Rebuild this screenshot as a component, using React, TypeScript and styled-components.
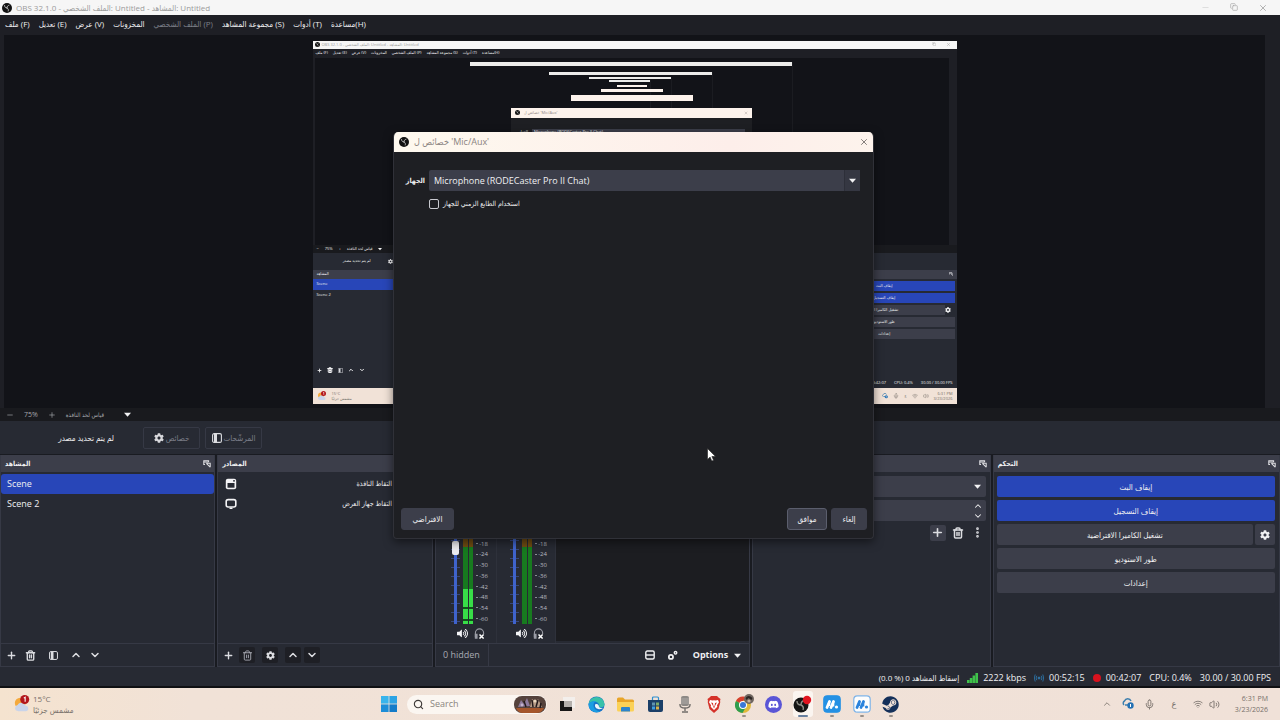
import React from 'react';
import styled, { createGlobalStyle, css } from 'styled-components';
import {
  Plus, Trash2, ChevronUp, ChevronDown, EllipsisVertical, Search, Wifi, Volume2, Mic, X, Copy, Minus,
} from 'lucide-react';
import { FaCog, FaDiscord, FaVolumeUp, FaSteam } from 'react-icons/fa';

const c = {
  base: '#1e1f25',
  canvas: '#121318',
  panel: '#272a33',
  header: '#3c3e4a',
  control: '#3c3e4a',
  line: '#363945',
  blue: '#2846b8',
  text: '#f0f0f2',
  dim: '#7c7f89',
  dialog: '#1e1f23',
  cream: '#fdf3ec',
  taskbar: '#f1e2d7',
};

const Global = createGlobalStyle`
  *, *::before, *::after { box-sizing: border-box; }
  body { margin: 0; background: ${c.base}; }
  body, button, input, select {
    font-family: "Open Sans", "DejaVu Sans Condensed", "DejaVu Sans", sans-serif;
    font-size: 9px;
    line-height: 12px;
    color: ${c.text};
  }
  button, input, select { margin: 0; padding: 0; border: 0; background: none; }
  ul { list-style: none; margin: 0; padding: 0; }
  h1, h2, p { margin: 0; font: inherit; }
  svg { display: block; flex: none; }
`;

const Desktop = styled.div`
  position: relative;
  min-height: 100vh;
  display: flex;
  flex-direction: column;
  overflow: hidden;
  background: ${c.base};
`;

/* ---------- window chrome ---------- */

const TitleBar = styled.header`
  display: flex;
  align-items: center;
  gap: 4px;
  height: 15px;
  padding: 0 12px 0 2px;
  background: #f6f6f6;
  color: #9b9b9b;
`;

const WindowTitle = styled.h1`
  flex: 1;
  white-space: nowrap;
  font-size: 8px;
`;

const WindowButtons = styled.div`
  display: flex;
  gap: 20px;
  color: #a4a4a4;
`;

const MenuBar = styled.nav`
  display: flex;
  align-items: center;
  gap: 9px;
  height: 18px;
  padding: 0 5px;
  background: ${c.base};
`;

const MenuItem = styled.button<{ $dim?: boolean }>`
  white-space: nowrap;
  font-size: 8px;
  color: ${p => (p.$dim ? c.dim : c.text)};
`;

/* ---------- preview ---------- */

const Preview = styled.main`
  flex: 1 1 auto;
  min-height: 373px;
  display: flex;
  justify-content: center;
  align-items: center;
  margin: 2px 15px 0 4px;
  padding-top: 1px;
  background: ${c.canvas};
`;

const Capture = styled.div`
  display: flex;
  flex-direction: column;
  height: 363px;
  aspect-ratio: 644 / 363;
  overflow: hidden;
  font-size: 4px;
  line-height: 6px;
  background: ${c.base};
  position: relative;
`;

const MiniTitle = styled.div`
  display: flex;
  align-items: center;
  gap: 2px;
  height: 8px;
  flex: none;
  padding: 0 6px 0 2px;
  background: #f6f6f6;
  color: #9b9b9b;
  & > span { flex: 1; white-space: nowrap; }
`;

const MiniWindowButtons = styled.div`
  display: flex;
  gap: 10px;
`;

const MiniMenu = styled.div`
  display: flex;
  align-items: center;
  gap: 5px;
  height: 9px;
  flex: none;
  padding: 0 3px;
  white-space: nowrap;
`;

const MiniPreview = styled.div`
  flex: 1;
  display: flex;
  justify-content: center;
  align-items: flex-start;
  margin: 0 8px 0 2px;
  padding-top: 4px;
  background: ${c.canvas};
`;

const EchoWindow = styled.div<{ $bar: number; $gap: number }>`
  display: flex;
  flex-direction: column;
  align-items: center;
  width: 51%;
  height: 182px;
  border-right: 1px solid #1b1c21;
  &::before {
    content: "";
    width: 100%;
    height: ${p => p.$bar}px;
    margin-bottom: ${p => p.$gap}px;
    flex: none;
    background: #ececea;
  }
`;

const EchoDialogs = styled.div`
  position: absolute;
  top: 44px;
  left: 0;
  width: 638px;
  display: flex;
  flex-direction: column;
  align-items: center;
`;

const EchoBar = styled.div<{ $w: number; $h: number; $gap: number }>`
  display: flex;
  align-items: center;
  gap: 4px;
  padding: 0 4px;
  width: ${p => p.$w}px;
  height: ${p => p.$h}px;
  margin-bottom: ${p => p.$gap}px;
  background: ${c.cream};
  color: #8f8783;
  & > span { flex: 1; }
`;

const EchoBody = styled.div`
  width: 241px;
  padding: 11px 7px 0 8px;
  display: flex;
  gap: 4px;
  height: 40px;
  background: ${c.dialog};
`;

const EchoField = styled.div`
  flex: 1;
  height: 10px;
  padding: 0 2px;
  background: ${c.control};
`;

const MiniRow = styled.div<{ $h: number; $bg: string; $gap?: number }>`
  display: flex;
  align-items: center;
  gap: ${p => p.$gap || 8}px;
  flex: none;
  height: ${p => p.$h}px;
  padding: 0 4px;
  background: ${p => p.$bg};
`;

const MiniState = styled.span`
  width: 54px;
  text-align: right;
`;

const MiniDocks = styled.div`
  display: grid;
  grid-template-columns: 216fr 216fr 316fr 239fr 288fr;
  gap: 1px;
  height: 108px;
  flex: none;
`;

const MiniDock = styled.div`
  display: flex;
  flex-direction: column;
  background: ${c.panel};
`;

const MiniItem = styled.div<{ $on?: boolean }>`
  height: 11px;
  padding: 2px 4px;
  background: ${p => (p.$on ? c.blue : 'transparent')};
`;

const MiniButtons = styled.div`
  display: grid;
  gap: 2px;
  padding: 2px;
`;

const MiniButton = styled.div<{ $on?: boolean }>`
  height: 10px;
  line-height: 10px;
  text-align: center;
  background: ${p => (p.$on ? c.blue : c.control)};
`;

const MiniGearRow = styled.div`
  display: grid;
  grid-template-columns: 1fr 10px;
  align-items: center;
`;

const Spacer = styled.span`
  flex: 1;
`;

const MiniText = styled.span<{ $end?: boolean }>`
  color: #77706a;
  text-align: ${p => (p.$end ? 'right' : 'left')};
  line-height: 5px;
`;

/* ---------- strips below the preview ---------- */

const ZoomBar = styled.div`
  display: flex;
  align-items: center;
  gap: 10px;
  height: 13px;
  padding: 0 6px;
  background: #191a1e;
  color: #a5a6ab;
  font-size: 7px;
`;

const ScaleMode = styled.button`
  display: flex;
  align-items: center;
  justify-content: space-between;
  width: 65px;
  color: inherit;
  font-size: 6px;
`;

const SourceBar = styled.div`
  display: flex;
  align-items: center;
  gap: 5px;
  height: 33px;
  padding: 0 4px;
  background: ${c.panel};
`;

const SourceState = styled.p`
  width: 134px;
  padding: 0 24px 0 0;
  text-align: right;
  font-size: 8px;
`;

const GhostButton = styled.button`
  display: flex;
  align-items: center;
  justify-content: center;
  gap: 2px;
  width: 57px;
  height: 22px;
  border: 1px solid ${c.line};
  border-radius: 2px;
  color: ${c.dim};
  font-size: 8px;
  white-space: nowrap;
  & svg { color: #d8d8dc; }
`;

/* ---------- docks ---------- */

const Docks = styled.div`
  display: grid;
  grid-template-columns: 216fr 216fr 316fr 239fr 288fr;
  gap: 2px;
  padding-top: 1px;
  min-height: 213px;
  background: #191b21;
`;

const Dock = styled.section`
  display: flex;
  flex-direction: column;
  min-width: 0;
  border: solid ${c.line};
  border-width: 0 1px 1px;
  background: ${c.panel};
`;

const DockHeader = styled.header`
  display: flex;
  align-items: center;
  justify-content: space-between;
  height: 17px;
  flex: none;
  padding: 0 3px 0 4px;
  background: ${c.header};
  font-size: 7px;
  font-weight: 700;
`;

const DockBody = styled.div`
  flex: 1;
  display: flex;
  flex-direction: column;
`;

const DockFooter = styled.footer`
  display: flex;
  align-items: center;
  gap: 3px;
  height: 23px;
  flex: none;
  padding: 0 2px;
  border-top: 1px solid ${c.line};
`;

const IconButton = styled.button<{ $fill?: string; $before?: number }>`
  display: grid;
  place-items: center;
  width: 16px;
  height: 16px;
  margin-left: ${p => p.$before || 0}px;
  border-radius: 2px;
  background: ${p => p.$fill || 'transparent'};
  color: #dcdde1;
`;

const SceneItem = styled.button<{ $on?: boolean }>`
  display: block;
  width: 100%;
  height: 20px;
  padding: 0 6px;
  border-radius: 3px;
  text-align: left;
  background: ${p => (p.$on ? c.blue : 'transparent')};
`;

const SceneList = styled.ul`
  padding: 2px 0 0;
`;

const SourceItem = styled.li`
  display: flex;
  align-items: center;
  justify-content: space-between;
  height: 20px;
  padding: 0 40px 0 7px;
  font-size: 7px;
`;

const MixerBody = styled(DockBody)`
  flex-direction: row;
`;

const Channel = styled.div<{ $w: number }>`
  display: flex;
  flex-direction: column;
  justify-content: flex-end;
  align-items: flex-end;
  width: ${p => p.$w}px;
  gap: 3px;
  padding: 0 8px 4px 0;
  border-right: 1px solid #2e313b;
`;

const Strip = styled.div`
  display: flex;
  align-items: flex-end;
  gap: 3px;
`;

const Fader = styled.input`
  appearance: none;
  writing-mode: vertical-lr;
  direction: rtl;
  width: 9px;
  height: 138px;
  background: linear-gradient(#3f63cc, #3f63cc) center / 3px 100% no-repeat,
    repeating-linear-gradient(#39487c 0 1px, transparent 1px 9px);
  &::-webkit-slider-thumb {
    appearance: none;
    width: 7px;
    height: 14px;
    border-radius: 2px;
    background: #ececf0;
  }
`;

const Meter = styled.div<{ $live?: boolean }>`
  display: grid;
  grid-template-columns: 1fr 1fr;
  gap: 1px;
  width: 10px;
  height: 118px;
  & > i {
    background: ${p =>
      p.$live
        ? 'linear-gradient(#7d1a1a 0 15px, #6f4c12 15px 41px, #177a1f 41px 83px, #38dd48 83px 101px, #10541a 101px 103px, #38dd48 103px 113px, #10541a 113px 115px, #38dd48 115px)'
        : 'linear-gradient(#7d1a1a 0 15px, #6f4c12 15px 41px, #177a1f 41px)'};
  }
`;

const Scale = styled.ol`
  display: flex;
  flex-direction: column;
  height: 118px;
  margin: 0;
  padding: 0;
  list-style: none;
  font-size: 6px;
  line-height: 10px;
  color: #b9bac0;
  & > li {
    flex: 1;
    display: flex;
    align-items: center;
    gap: 1px;
  }
  & > li::before {
    content: "";
    width: 2px;
    height: 1px;
    background: #8b8d95;
  }
`;

const ChannelTools = styled.div`
  display: flex;
  gap: 6px;
  margin-right: 3px;
`;

const ToolButton = styled.button`
  display: grid;
  place-items: center;
  width: 11px;
  height: 12px;
`;

const MixerRest = styled.div`
  flex: 1;
  margin-bottom: 2px;
  background: #1c1d21;
`;

const Hidden = styled.span`
  align-self: stretch;
  display: flex;
  align-items: center;
  padding: 0 8px 0 5px;
  border-right: 1px solid ${c.line};
  color: #a9abb3;
`;

const OptionsButton = styled.button`
  display: flex;
  align-items: center;
  gap: 6px;
  padding: 0 6px 0 9px;
  font-weight: 700;
`;

const FieldBox = styled.div`
  position: relative;
  display: flex;
  height: 21px;
  border-radius: 2px;
  background: ${c.control};
`;

const Field = styled.select`
  appearance: none;
  flex: 1;
  min-width: 0;
  padding: 0 20px 0 5px;
  outline: none;
  font-size: 9px;
`;

const NumberField = styled.input`
  appearance: textfield;
  flex: 1;
  min-width: 0;
  outline: none;
`;

const FieldArrow = styled.span<{ $split?: boolean }>`
  position: absolute;
  right: 0;
  top: 0;
  bottom: 0;
  width: 16px;
  display: grid;
  place-content: center;
  pointer-events: none;
  ${p => p.$split && css`
    border-left: 1px solid #2d2f39;
    background: #353742;
  `}
`;

const TransitionForm = styled.div`
  display: grid;
  gap: 3px;
  padding: 4px 4px 0;
`;

const TransitionTools = styled.div`
  display: flex;
  align-items: center;
  justify-content: flex-end;
  gap: 4px;
  height: 17px;
`;

const ControlList = styled.div`
  display: grid;
  gap: 3px;
  padding: 4px 4px 0 3px;
`;

const ControlRow = styled.div`
  display: grid;
  grid-template-columns: 1fr 20px;
  gap: 2px;
`;

const ControlButton = styled.button<{ $on?: boolean }>`
  display: grid;
  place-items: center;
  height: 21px;
  border-radius: 2px;
  font-size: 8px;
  background: ${p => (p.$on ? c.blue : c.control)};
`;

/* ---------- status bar ---------- */

const StatusBar = styled.div`
  display: flex;
  align-items: center;
  justify-content: flex-end;
  gap: 8px;
  height: 21px;
  padding: 2px 9px 0;
  background: ${c.panel};
  border-bottom: 2px solid #0f1013;
  white-space: nowrap;
`;

const Stat = styled.span<{ $small?: boolean }>`
  display: flex;
  align-items: center;
  gap: 5px;
  font-size: ${p => (p.$small ? 8 : 9)}px;
`;

/* ---------- dialog ---------- */

const Dialog = styled.div`
  position: absolute;
  top: 132px;
  left: calc(50% - 247px);
  width: 481px;
  height: 407px;
  display: flex;
  flex-direction: column;
  border: 1px solid #303138;
  border-top: 0;
  border-radius: 5px 5px 4px 4px;
  overflow: hidden;
  background: ${c.dialog};
  box-shadow: 0 3px 10px rgba(0, 0, 0, 0.5);
`;

const DialogTitle = styled.header`
  display: flex;
  align-items: center;
  gap: 5px;
  height: 20px;
  flex: none;
  padding: 0 1px 0 5px;
  background: linear-gradient(90deg, #fef9ef, #fdeeea 70%, #fdf3ec);
  color: #8a8380;
  & > h2 { flex: 1; }
`;

const DialogForm = styled.div`
  flex: 1;
  display: grid;
  grid-template-columns: 24px 1fr;
  grid-auto-rows: max-content;
  gap: 7px 4px;
  align-items: center;
  padding: 18px 13px 0 7px;
`;

const FieldLabel = styled.label`
  text-align: right;
  font-size: 7px;
  font-weight: 600;
`;

const CheckRow = styled.label`
  grid-column: 2;
  display: flex;
  align-items: center;
  gap: 4px;
  font-size: 7px;
`;

const Check = styled.input`
  appearance: none;
  width: 10px;
  height: 10px;
  border: 1px solid #c9cad0;
  border-radius: 2px;
`;

const DialogActions = styled.div`
  display: flex;
  gap: 4px;
  padding: 0 6px 8px 7px;
`;

const DialogButton = styled.button<{ $w: number; $focus?: boolean }>`
  width: ${p => p.$w}px;
  height: 22px;
  border: 1px solid ${p => (p.$focus ? '#5b5e6d' : c.control)};
  border-radius: 3px;
  font-size: 8px;
  background: ${c.control};
`;

const Cursor = styled.svg`
  position: absolute;
  top: 448px;
  left: calc(50% + 67px);
`;

/* ---------- taskbar ---------- */

const Taskbar = styled.div`
  display: grid;
  grid-template-columns: 1fr auto 1fr;
  align-items: center;
  height: 32px;
  background: linear-gradient(90deg, #f5e3cf, ${c.taskbar} 15%, #f0e1d8);
  color: #77706a;
`;

const Weather = styled.div`
  display: flex;
  align-items: center;
  gap: 2px;
  padding-left: 13px;
  font-size: 8px;
  line-height: 11px;
`;

const Pinned = styled.div`
  display: flex;
  align-items: center;
  gap: 10px;
  padding-left: 2px;
`;

const SearchBox = styled.label`
  display: flex;
  align-items: center;
  gap: 6px;
  width: 140px;
  height: 19px;
  padding: 0 1px 0 6px;
  border-radius: 10px;
  background: #fbf6f1;
`;

const SearchInput = styled.input`
  flex: 1;
  min-width: 0;
  outline: none;
  &::placeholder { color: #8a8580; opacity: 1; }
`;

const Apps = styled.div`
  display: flex;
  justify-content: space-between;
  width: 344px;
`;

const AppButton = styled.button<{ $active?: boolean; $open?: boolean }>`
  position: relative;
  display: grid;
  place-items: center;
  width: 20px;
  height: 26px;
  border-radius: 3px;
  background: ${p => (p.$active ? '#fbf5f0' : 'transparent')};
  &::after {
    content: "";
    position: absolute;
    bottom: 0;
    width: ${p => (p.$active ? 10 : 4)}px;
    height: 2px;
    border-radius: 1px;
    background: ${p => (p.$active ? '#68809f' : p.$open ? '#98908a' : 'transparent')};
  }
`;

const Tray = styled.div`
  display: flex;
  align-items: center;
  justify-content: flex-end;
  gap: 10px;
  padding-right: 12px;
`;

const TrayPair = styled.div`
  display: flex;
  gap: 6px;
`;

const Language = styled.span`
  width: 18px;
  text-align: center;
`;

const Clock = styled.div`
  width: 38px;
  text-align: right;
  font-size: 7px;
  line-height: 11px;
  white-space: nowrap;
`;

/* ---------- drawings ---------- */

const ObsLogo = ({ size = 10 }: { size?: number }) => (
  <svg width={size} height={size} viewBox="0 0 20 20">
    <circle cx="10" cy="10" r="10" fill="#121212" />
    <g fill="none" stroke="#d6d6d6" strokeWidth="1.6" strokeLinecap="round">
      <path d="M5 5c0 3 2 5 5 5" />
      <path d="M14 4.500c-2.800.6-4.300 2.700-4 5.500" />
      <path d="M12.500 16c1-2.700 0-5-2.500-6" />
    </g>
  </svg>
);

const Caret = ({ w = 7 }: { w?: number }) => (
  <svg width={w} height={w} viewBox="0 0 8 8"><path d="M0 2h8L4 6.500z" fill="#f2f2f4" /></svg>
);

const FloatIcon = ({ size = 8 }: { size?: number }) => (
  <svg width={size} height={size} viewBox="0 0 10 10" fill="none" stroke="#e0e0e4" strokeWidth="1.300">
    <path d="M2.500 5.500h-1.500v-4.500h6v1.500" />
    <path d="M1 2.500h6" />
    <path d="M4 4h5v5M9 9L4.500 4.500" />
  </svg>
);

const FilterIcon = ({ size = 10 }: { size?: number }) => (
  <svg width={size} height={size} viewBox="0 0 10 10">
    <rect x=".6" y=".6" width="8.800" height="8.800" rx="1.500" fill="none" stroke="#dcdde1" strokeWidth="1.100" />
    <path d="M2 1h3v8H2z" fill="#dcdde1" />
  </svg>
);

const WindowIcon = () => (
  <svg width="12" height="12" viewBox="0 0 12 12">
    <rect x=".8" y=".8" width="10.400" height="10.400" rx="2" fill="#f4f4f6" />
    <path d="M2.500 5h7v4.700h-7z" fill={c.panel} />
    <path d="M8 2.200h2v1.300H8z" fill={c.panel} />
  </svg>
);

const DisplayIcon = () => (
  <svg width="12" height="12" viewBox="0 0 12 12">
    <rect x="1.200" y="1.600" width="9.600" height="7.400" rx="2" fill="none" stroke="#f4f4f6" strokeWidth="1.600" />
    <path d="M4 11l2-2 2 2z" fill="#f4f4f6" />
  </svg>
);

const HeadphoneOff = () => (
  <svg width="11" height="11" viewBox="0 0 12 12" fill="none" stroke="#9a9ca5" strokeWidth="1.200">
    <path d="M1.500 10V5.500a4.500 4.500 0 0 1 9 0V6.500" />
    <path d="M1.500 7h1.800v4H1.500z" fill="#9a9ca5" />
    <path d="M6 7l4.500 4.500M10.500 7L6 11.500" stroke="#fff" strokeWidth="1.600" />
  </svg>
);

const LayoutIcon = () => (
  <svg width="10" height="10" viewBox="0 0 10 10" fill="none" stroke="#f0f0f2" strokeWidth="1.400">
    <rect x=".8" y="1" width="8.400" height="8" rx="1.500" /><path d="M1 5h8" />
  </svg>
);

const GearsIcon = () => (
  <svg width="11" height="11" viewBox="0 0 12 12" fill="none" stroke="#f0f0f2">
    <circle cx="4.300" cy="7.500" r="2.300" strokeWidth="1.900" /><circle cx="9.300" cy="3" r="1.400" strokeWidth="1.500" />
  </svg>
);

const SignalIcon = () => (
  <svg width="11" height="10" viewBox="0 0 11 10" fill="#3fc24b">
    <path d="M0 7h2.500v3H0zM2.800 5h2.500v5H2.800zM5.600 2.500h2.500V10H5.600zM8.400 0H11v10H8.400z" />
  </svg>
);

const StreamIcon = () => (
  <svg width="10" height="8" viewBox="0 0 10 8" fill="none" stroke="#2c6c9c" strokeWidth="1">
    <circle cx="5" cy="4" r="1" fill="#3f94cf" />
    <path d="M2.800 1.800q-1.500 2.200 0 4.400M7.200 1.800q1.500 2.200 0 4.400M1.200.5q-1.700 3.500 0 7M8.800.5q1.700 3.500 0 7" />
  </svg>
);

const RecordDot = () => (
  <svg width="8" height="8" viewBox="0 0 8 8"><circle cx="4" cy="4" r="4" fill="#d8121e" /></svg>
);

const WeatherIcon = ({ size = 18 }: { size?: number }) => (
  <svg width={size} height={size} viewBox="0 0 18 20">
    <circle cx="7" cy="9" r="6" fill="#f4a93c" />
    <path d="M2 17a4 4 0 0 1 2-6 5 5 0 0 1 9 1 3 3 0 0 1 0 6H5z" fill="#c9d4ea" />
    <circle cx="12" cy="5" r="5" fill="#b3161c" />
    <path d="M11 3.500l1.500-1v5" stroke="#fff" strokeWidth="1.200" fill="none" />
  </svg>
);

const StartIcon = () => (
  <svg width="16" height="16" viewBox="0 0 16 16">
    <path d="M0 0h7.600v7.600H0z" fill="#39b4ec" /><path d="M8.400 0H16v7.600H8.400z" fill="#2ca3e4" />
    <path d="M0 8.400h7.600V16H0z" fill="#1d8ed8" /><path d="M8.400 8.400H16V16H8.400z" fill="#137bc9" />
  </svg>
);

const SearchArt = () => (
  <svg width="32" height="17" viewBox="0 0 32 17">
    <rect width="32" height="17" rx="8" fill="#55423c" />
    <path d="M2 12h28q-2 5-8 5H9q-5 0-7-5z" fill="#a5562c" />
    <path d="M4 11l3-7 3 4 3-6 3 8z" fill="#8d7a9c" />
    <path d="M16 11l2-8 4 3 2-3 4 8z" fill="#b59a86" />
    <path d="M10 5l2 6M18 4l1 7M24 4l-2 7M27 7l-1 5" stroke="#231a1c" strokeWidth="1.500" />
    <circle cx="21" cy="5" r="1.500" fill="#e8d8c0" /><circle cx="8" cy="9" r="1.400" fill="#c2b3cc" />
  </svg>
);

const TaskView = () => (
  <svg width="15" height="15" viewBox="0 0 15 15">
    <rect x="3" y="0" width="12" height="11" fill="#f3efec" />
    <path d="M0 4h4v6h8v4H0z" fill="#171717" /><path d="M4 4h8v6H4z" fill="#b4b0ac" />
  </svg>
);

const EdgeIcon = () => (
  <svg width="17" height="17" viewBox="0 0 18 18">
    <circle cx="9" cy="9" r="8.500" fill="#1874c9" />
    <path d="M.7 8A8.500 8.500 0 0 1 17.500 8.500c0 3-2.600 4-4.800 3.700-1.500-.2-1-1-.8-2.200C11.500 6 5 4 .7 8z" fill="#38c1a9" />
    <path d="M.7 8C4 4.600 9 5.400 9 5.400 6 6.500 5.500 9 6 11.500c.7 3 4 5 7.500 4.500A8.500 8.500 0 0 1 .7 8z" fill="#1b9de2" />
    <path d="M8 8.500c-1.500 2-.2 5 3.500 5.400 2 .2 3.500-.4 4.700-1.400-2.500.6-4.700-.2-4.700-1.700 0-1-1-2.800-3.500-2.300z" fill="#eef6fa" />
  </svg>
);

const FolderIcon = () => (
  <svg width="17" height="15" viewBox="0 0 17 15">
    <path d="M0 2q0-1.500 1.500-1.500H6L8 2.500h7.500Q17 2.500 17 4v9H0z" fill="#e8a427" />
    <path d="M0 5h17v8q0 1.500-1.500 1.500h-14Q0 14.500 0 13z" fill="#fbd157" />
    <path d="M4 11q0-1 1-1h7q1 0 1 1v3.500H4z" fill="#2c84cc" />
  </svg>
);

const StoreIcon = () => (
  <svg width="17" height="17" viewBox="0 0 17 17">
    <path d="M5.500 4V2q0-1 1-1h4q1 0 1 1v2" fill="none" stroke="#2f8fd0" strokeWidth="1.200" />
    <path d="M1 4h15v10q0 2-2 2H3q-2 0-2-2z" fill="#1b3f68" />
    <path d="M5 6.500h3v3H5z" fill="#5f93b0" /><path d="M9 6.500h3v3H9z" fill="#7cab6a" />
    <path d="M5 10.500h3v3H5z" fill="#3f9fe0" /><path d="M9 10.500h3v3H9z" fill="#d8b04a" />
  </svg>
);

const MicApp = () => (
  <svg width="12" height="17" viewBox="0 0 12 17">
    <rect x="2" y="0" width="8" height="10" rx="2" fill="#8d8986" />
    <path d="M2 3h8M2 5h8M2 7h8" stroke="#b9b5b1" strokeWidth=".8" />
    <path d="M1 8v1q0 3 5 3t5-3V8M6 12v3M3 16h6" fill="none" stroke="#716d6a" strokeWidth="1.400" />
  </svg>
);

const BraveIcon = () => (
  <svg width="14" height="17" viewBox="0 0 14 17">
    <path d="M4 0h6l1.500 1.500L13.500 3l-.5 2 .3 1L11.500 13 7 17l-4.500-4L.7 6 1 5 .5 3l2-1.500z" fill="#d5322a" />
    <path d="M3 4l2.500.6L7 4.200l1.500.4L11 4l1 2.200-2 3 .3 1.500L7 14l-3.300-3.300L4 9.200l-2-3z" fill="#fff" />
    <path d="M4 6.500l2 .6.300 2.200L7 11l.7-1.700.3-2.200 2-.6L8.500 9 7 12.500 5.500 9z" fill="#d5322a" />
  </svg>
);

const ChromeIcon = () => (
  <svg width="20" height="20" viewBox="0 0 20 20">
    <circle cx="9" cy="11" r="8" fill="#e0b93a" />
    <path d="M9 11L2 7a8 8 0 0 1 14-0.500H9z" fill="#d5402f" />
    <path d="M9 11L2 7a8 8 0 0 0 6.500 12L12 13z" fill="#2f9e4f" />
    <circle cx="9" cy="11" r="4" fill="#fff" /><circle cx="9" cy="11" r="3" fill="#3a78d8" />
    <circle cx="15" cy="5" r="5" fill="#6f6660" /><path d="M11.500 4q3-4 7 0l-1 2-3-2-2 2z" fill="#2c2624" />
    <circle cx="15" cy="7" r="1.600" fill="#c6b2a2" />
  </svg>
);

const DiscordIcon = () => (
  <svg width="17" height="17" viewBox="0 0 17 17">
    <circle cx="8.500" cy="8.500" r="8.500" fill="#5a55d6" />
    <FaDiscord x="3" y="3" size={11} color="#fff" />
  </svg>
);

const ObsApp = () => (
  <svg width="19" height="18" viewBox="0 0 19 18">
    <circle cx="8" cy="10" r="7.500" fill="#151515" />
    <g fill="none" stroke="#8d8d86" strokeWidth="1.400">
      <path d="M4 6c0 2.500 1.500 4 4 4M11 5.500C9 6 8 7.500 8 10M10 15c.8-2 0-4-2-5" />
    </g>
    <circle cx="14" cy="5" r="4.200" fill="#e01420" />
  </svg>
);

const MApp = ({ light }: { light?: boolean }) => {
  const ink = light ? '#2b83dc' : '#fff';
  return (
    <svg width="18" height="18" viewBox="0 0 18 18">
      <rect x=".8" y=".8" width="16.400" height="16.400" rx="3.500" fill={light ? '#fdfdfd' : '#2591e4'} stroke={light ? '#7fb4e8' : '#2591e4'} strokeWidth="1.200" />
      <path d="M4 12.500L6.500 6.500M8 12.500L10.500 6.500" fill="none" stroke={ink} strokeWidth="2.800" strokeLinecap="round" />
      <path d="M6.500 6v5M10.500 6v5.500" stroke={ink} strokeWidth="1.600" />
      <circle cx="13.500" cy="12" r="1.600" fill={ink} />
    </svg>
  );
};

const CloudTray = ({ size = 12 }: { size?: number }) => (
  <svg width={size} height={size} viewBox="0 0 12 12">
    <path d="M2 7a2.500 2.500 0 0 1 .5-4 3.500 3.500 0 0 1 6.500 0" fill="none" stroke="#3d7fae" strokeWidth="1.500" />
    <path d="M3 7h3" stroke="#3d7fae" strokeWidth="1.500" />
    <circle cx="8.500" cy="7.500" r="3.200" fill="#2471b4" /><path d="M8.500 6v3" stroke="#fff" strokeWidth="1" />
  </svg>
);

/* ---------- data ---------- */

const menus = [
  { label: 'ملف (F)' },
  { label: 'تعديل (E)' },
  { label: 'عرض (V)' },
  { label: 'المخزونات' },
  { label: 'الملف الشخصي (P)', dim: true },
  { label: 'مجموعة المشاهد (S)' },
  { label: 'أدوات (T)' },
  { label: 'مساعدة(H)' },
];

const levels = ['0', '-6', '-12', '-18', '-24', '-30', '-36', '-42', '-48', '-54', '-60'];
const windowTitle = 'OBS 32.1.0 - الملف الشخصي: Untitled - المشاهد: Untitled';

/* ---------- parts ---------- */

const CapturedScreen = () => (
  <Capture>
    <MiniTitle>
      <ObsLogo size={5} /><span>{windowTitle}</span>
      <MiniWindowButtons><Copy size={4} /><X size={5} /></MiniWindowButtons>
    </MiniTitle>
    <MiniMenu>{menus.map(m => <span key={m.label}>{m.label}</span>)}</MiniMenu>
    <MiniPreview>
      <EchoWindow $bar={4} $gap={6}>
        <EchoWindow $bar={3} $gap={2}>
          <EchoWindow $bar={2} $gap={1}>
            <EchoWindow $bar={2} $gap={1} />
          </EchoWindow>
        </EchoWindow>
      </EchoWindow>
    </MiniPreview>
    <EchoDialogs>
      <EchoBar $w={30} $h={2} $gap={2} />
      <EchoBar $w={62} $h={3} $gap={3} />
      <EchoBar $w={122} $h={6} $gap={7} />
      <EchoBar $w={241} $h={10} $gap={0}>
        <ObsLogo size={5} /><span>خصائص ل 'Mic/Aux'</span><X size={4} />
      </EchoBar>
      <EchoBody>
        <span>الجهاز</span>
        <EchoField>Microphone (RODECaster Pro II Chat)</EchoField>
      </EchoBody>
    </EchoDialogs>
    <MiniRow $h={8} $bg="#191a1e" $gap={6}><span>−</span><span>75%</span><span>+</span><span>قياس لحد النافذة</span><Caret w={4} /></MiniRow>
    <MiniRow $h={17} $bg={c.panel} $gap={17}>
      <MiniState>لم يتم تحديد مصدر</MiniState>
      <FaCog size={5} />
    </MiniRow>
    <MiniDocks>
      <MiniDock>
        <MiniRow $h={9} $bg={c.header}>المشاهد</MiniRow>
        <MiniItem $on>Scene</MiniItem>
        <MiniItem>Scene 2</MiniItem>
        <Spacer />
        <MiniRow $h={15} $bg={c.panel} $gap={5}>
          <Plus size={5} strokeWidth={4} /><Trash2 size={6} strokeWidth={4} /><FilterIcon size={5} />
          <ChevronUp size={6} strokeWidth={4} /><ChevronDown size={6} strokeWidth={4} />
        </MiniRow>
      </MiniDock>
      <MiniDock />
      <MiniDock />
      <MiniDock />
      <MiniDock>
        <MiniRow $h={9} $bg={c.header}><Spacer /><FloatIcon size={4} /></MiniRow>
        <MiniButtons>
          <MiniButton $on>إيقاف البث</MiniButton>
          <MiniButton $on>إيقاف التسجيل</MiniButton>
          <MiniGearRow><MiniButton>تشغيل الكاميرا الافتراضية</MiniButton><FaCog size={6} /></MiniGearRow>
          <MiniButton>طور الاستوديو</MiniButton>
          <MiniButton>إعدادات</MiniButton>
        </MiniButtons>
      </MiniDock>
    </MiniDocks>
    <MiniRow $h={10} $bg={c.panel}>
      <Spacer /><span>00:42:07</span><span>CPU: 0.4%</span><span>30.00 / 30.00 FPS</span>
    </MiniRow>
    <MiniRow $h={16} $bg={c.taskbar} $gap={5}>
      <WeatherIcon size={10} /><MiniText>15°C<br />مشمس جزئيًا</MiniText>
      <Spacer />
      <CloudTray size={6} /><Mic size={6} color="#88817b" /><MiniText>ع</MiniText>
      <Wifi size={6} color="#88817b" /><Volume2 size={6} color="#88817b" />
      <MiniText $end>6:31 PM<br />3/23/2026</MiniText>
    </MiniRow>
  </Capture>
);

const MixerChannel = ({ width, gain, live, name }: { width: number; gain: number; live?: boolean; name: string }) => (
  <Channel $w={width}>
    <Strip>
      <Fader type="range" min={0} max={100} defaultValue={gain} aria-label={name} />
      <Meter $live={live}><i /><i /></Meter>
      <Scale>{levels.map(l => <li key={l}>{l}</li>)}</Scale>
    </Strip>
    <ChannelTools>
      <ToolButton aria-label="Mute"><FaVolumeUp size={11} color="#f4f4f6" /></ToolButton>
      <ToolButton aria-label="Monitor"><HeadphoneOff /></ToolButton>
    </ChannelTools>
  </Channel>
);

const PropertiesDialog = () => (
  <Dialog role="dialog" aria-labelledby="props-title">
    <DialogTitle>
      <ObsLogo />
      <h2 id="props-title">خصائص ل 'Mic/Aux'</h2>
      <IconButton aria-label="Close"><X size={10} color="#6d6764" /></IconButton>
    </DialogTitle>
    <DialogForm>
      <FieldLabel htmlFor="device">الجهاز</FieldLabel>
      <FieldBox>
        <Field id="device"><option>Microphone (RODECaster Pro II Chat)</option></Field>
        <FieldArrow $split><Caret /></FieldArrow>
      </FieldBox>
      <CheckRow><Check type="checkbox" />استخدام الطابع الزمني للجهاز</CheckRow>
    </DialogForm>
    <DialogActions>
      <DialogButton $w={53}>الافتراضي</DialogButton>
      <Spacer />
      <DialogButton $w={40} $focus>موافق</DialogButton>
      <DialogButton $w={36}>إلغاء</DialogButton>
    </DialogActions>
  </Dialog>
);

export default function App() {
  return (
    <>
      <Global />
      <Desktop>
        <TitleBar>
          <ObsLogo />
          <WindowTitle>{windowTitle}</WindowTitle>
          <WindowButtons><Minus size={9} color="#d5d5d5" /><Copy size={8} /><X size={10} /></WindowButtons>
        </TitleBar>
        <MenuBar>
          {menus.map(m => <MenuItem key={m.label} $dim={m.dim}>{m.label}</MenuItem>)}
        </MenuBar>
        <Preview><CapturedScreen /></Preview>
        <ZoomBar>
          <Minus size={8} /><span>75%</span><Plus size={8} />
          <ScaleMode>قياس لحد النافذة<Caret /></ScaleMode>
        </ZoomBar>
        <SourceBar>
          <SourceState>لم يتم تحديد مصدر</SourceState>
          <GhostButton><FaCog size={10} />خصائص</GhostButton>
          <GhostButton><FilterIcon />المرشّحات</GhostButton>
        </SourceBar>
        <Docks>
          <Dock>
            <DockHeader>المشاهد<FloatIcon /></DockHeader>
            <DockBody>
              <SceneList>
                <li><SceneItem $on>Scene</SceneItem></li>
                <li><SceneItem>Scene 2</SceneItem></li>
              </SceneList>
            </DockBody>
            <DockFooter>
              <IconButton aria-label="Add"><Plus size={11} strokeWidth={3} /></IconButton>
              <IconButton aria-label="Remove"><Trash2 size={11} strokeWidth={3} /></IconButton>
              <IconButton aria-label="Filters" $before={4}><FilterIcon size={9} /></IconButton>
              <IconButton aria-label="Up" $before={4}><ChevronUp size={12} strokeWidth={3} /></IconButton>
              <IconButton aria-label="Down"><ChevronDown size={12} strokeWidth={3} /></IconButton>
            </DockFooter>
          </Dock>
          <Dock>
            <DockHeader>المصادر<FloatIcon /></DockHeader>
            <DockBody>
              <SceneList>
                <SourceItem><WindowIcon />التقاط النافذة</SourceItem>
                <SourceItem><DisplayIcon />التقاط جهاز العرض</SourceItem>
              </SceneList>
            </DockBody>
            <DockFooter>
              <IconButton aria-label="Add"><Plus size={11} strokeWidth={3} /></IconButton>
              <IconButton aria-label="Remove" $fill={c.base}><Trash2 size={11} strokeWidth={2} color="#a9abb3" /></IconButton>
              <IconButton aria-label="Properties" $before={4} $fill={c.base}><FaCog size={9} /></IconButton>
              <IconButton aria-label="Up" $before={4} $fill={c.base}><ChevronUp size={12} strokeWidth={3} /></IconButton>
              <IconButton aria-label="Down" $fill={c.base}><ChevronDown size={12} strokeWidth={3} /></IconButton>
            </DockFooter>
          </Dock>
          <Dock>
            <DockHeader><span /><FloatIcon /></DockHeader>
            <MixerBody>
              <MixerChannel width={61} gain={56} live name="Mic/Aux" />
              <MixerChannel width={59} gain={100} name="Desktop" />
              <MixerRest />
            </MixerBody>
            <DockFooter>
              <Hidden>0 hidden</Hidden>
              <Spacer />
              <IconButton aria-label="Layout"><LayoutIcon /></IconButton>
              <IconButton aria-label="Advanced" $before={4}><GearsIcon /></IconButton>
              <OptionsButton>Options<Caret /></OptionsButton>
            </DockFooter>
          </Dock>
          <Dock>
            <DockHeader><span /><FloatIcon /></DockHeader>
            <TransitionForm>
              <FieldBox><Field aria-label="Transition" /><FieldArrow><Caret /></FieldArrow></FieldBox>
              <FieldBox>
                <NumberField type="number" aria-label="Duration" />
                <FieldArrow><ChevronUp size={10} strokeWidth={2.5} /><ChevronDown size={10} strokeWidth={2.5} /></FieldArrow>
              </FieldBox>
              <TransitionTools>
                <IconButton aria-label="Add" $fill={c.control}><Plus size={13} strokeWidth={3} /></IconButton>
                <IconButton aria-label="Remove"><Trash2 size={12} strokeWidth={3} /></IconButton>
                <IconButton aria-label="More"><EllipsisVertical size={13} strokeWidth={3} /></IconButton>
              </TransitionTools>
            </TransitionForm>
          </Dock>
          <Dock>
            <DockHeader>التحكم<FloatIcon /></DockHeader>
            <ControlList>
              <ControlButton $on>إيقاف البث</ControlButton>
              <ControlButton $on>إيقاف التسجيل</ControlButton>
              <ControlRow>
                <ControlButton>تشغيل الكاميرا الافتراضية</ControlButton>
                <ControlButton aria-label="Settings"><FaCog size={10} /></ControlButton>
              </ControlRow>
              <ControlButton>طور الاستوديو</ControlButton>
              <ControlButton>إعدادات</ControlButton>
            </ControlList>
          </Dock>
        </Docks>
        <StatusBar>
          <Stat $small>(0.0 %) 0 إسقاط المشاهد</Stat>
          <Stat><SignalIcon />2222 kbps</Stat>
          <Stat><StreamIcon />00:52:15</Stat>
          <Stat><RecordDot />00:42:07</Stat>
          <Stat>CPU: 0.4%</Stat>
          <Stat>30.00 / 30.00 FPS</Stat>
        </StatusBar>
        <Taskbar>
          <Weather>
            <WeatherIcon />
            <div>15°C<br />مشمس جزئيًا</div>
          </Weather>
          <Pinned>
            <StartIcon />
            <SearchBox>
              <Search size={11} strokeWidth={2.5} color="#3f3b39" />
              <SearchInput placeholder="Search" />
              <SearchArt />
            </SearchBox>
            <Apps>
              <AppButton aria-label="Task view"><TaskView /></AppButton>
              <AppButton aria-label="Edge"><EdgeIcon /></AppButton>
              <AppButton aria-label="Files"><FolderIcon /></AppButton>
              <AppButton aria-label="Store"><StoreIcon /></AppButton>
              <AppButton aria-label="Recorder"><MicApp /></AppButton>
              <AppButton aria-label="Brave"><BraveIcon /></AppButton>
              <AppButton aria-label="Chrome" $open><ChromeIcon /></AppButton>
              <AppButton aria-label="Discord"><DiscordIcon /></AppButton>
              <AppButton aria-label="OBS" $active><ObsApp /></AppButton>
              <AppButton aria-label="M" $open><MApp /></AppButton>
              <AppButton aria-label="M light" $open><MApp light /></AppButton>
              <AppButton aria-label="Steam" $open><FaSteam size={17} color="#14305a" /></AppButton>
            </Apps>
          </Pinned>
          <Tray>
            <ChevronUp size={10} />
            <CloudTray />
            <Mic size={11} />
            <Language>ع</Language>
            <TrayPair><Wifi size={10} /><Volume2 size={11} /></TrayPair>
            <Clock>6:31 PM<br />3/23/2026</Clock>
          </Tray>
        </Taskbar>
        <PropertiesDialog />
        <Cursor width="9" height="14" viewBox="0 0 9 14">
          <path d="M.5.500v11l2.600-2.400 1.700 4 1.800-.8-1.700-3.800h3.600z" fill="#fff" stroke="#222" strokeWidth=".6" />
        </Cursor>
      </Desktop>
    </>
  );
}
